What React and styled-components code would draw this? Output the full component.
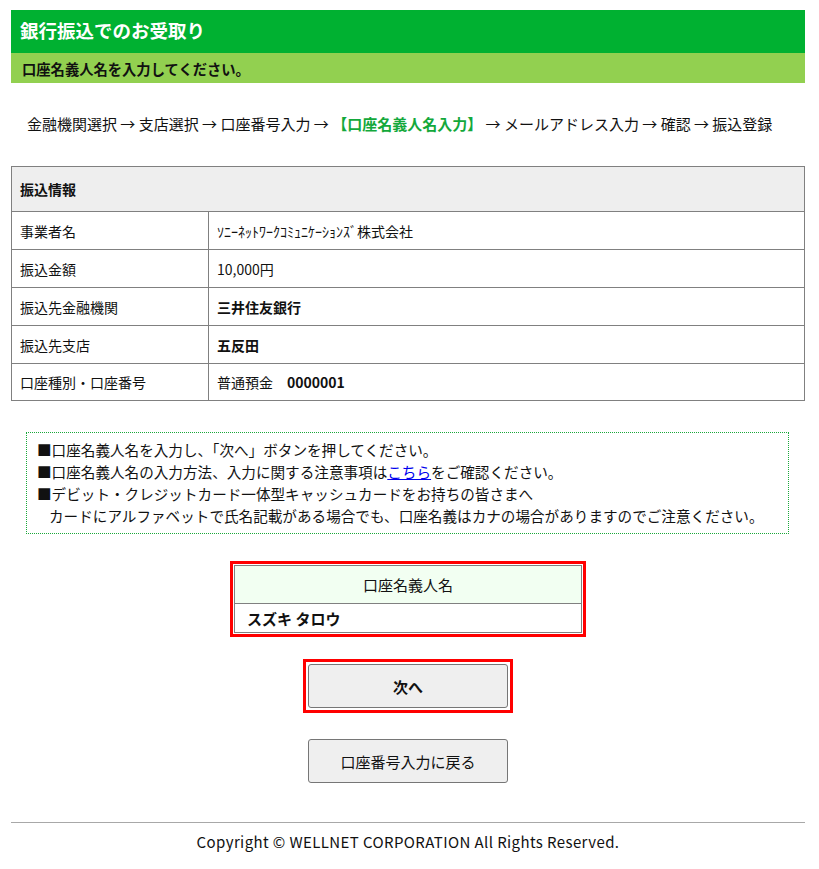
import React from "react";
import styled, { createGlobalStyle } from "styled-components";

const GlobalStyle = createGlobalStyle`
  body {
    margin: 0;
    background: #fff;
    color: #111;
    font-family: "Noto Sans CJK JP", "Noto Sans", sans-serif;
  }
`;

const Page = styled.div`
  padding: 10px 14px 0 11px;
`;

const TitleBar = styled.h1`
  margin: 0;
  height: 43px;
  padding: 0 0 3px 9px;
  box-sizing: border-box;
  display: flex;
  align-items: center;
  background: #00b131;
  color: #fff;
  font-size: 18.5px;
  font-weight: bold;
`;

const SubBar = styled.div`
  height: 30px;
  padding-left: 11px;
  display: flex;
  align-items: center;
  background: #92d050;
  font-size: 14.3px;
  font-weight: bold;
  color: #111;
`;

const Steps = styled.div`
  margin: 27px 0 28px;
  padding-left: 16px;
  height: 28px;
  line-height: 28px;
  font-size: 15px;
  white-space: nowrap;
`;

const Current = styled.strong`
  color: #13a83b;
`;

const InfoTable = styled.table`
  width: 100%;
  border-collapse: collapse;
  font-size: 14px;

  th,
  td {
    border: 1px solid #808080;
    padding: 0 8px;
    text-align: left;
  }
  th {
    height: 44px;
    background: #eeeeee;
  }
  td {
    height: 37px;
  }
  tr:last-child td {
    height: 36px;
  }
  td:first-child {
    width: 180px;
  }
`;

const Bold = styled.strong`
  font-weight: bold;
`;

const Notice = styled.div`
  margin: 31px 16px 0 15px;
  padding: 6px 10px;
  border: 1px dotted #1aa83a;
  font-size: 14.6px;
  line-height: 22px;
`;

const NoticeLine = styled.div`
  padding-left: ${(p) => (p.$indent ? "12px" : "0")};
  white-space: nowrap;
`;

const Link = styled.a`
  color: #0000ee;
  text-decoration: underline;
`;

const Center = styled.div`
  display: flex;
  flex-direction: column;
  align-items: center;
`;

const RedFrame = styled.div`
  border: 3px solid #ff0000;
  padding: ${(p) => p.$pad || "1px"};
  margin-top: ${(p) => p.$top || "0"};
`;

const NameTable = styled.table`
  width: 348px;
  border-collapse: collapse;
  font-size: 15px;

  th,
  td {
    border: 1px solid #808080;
  }
  th {
    height: 35px;
    background: #f2fff2;
    font-weight: normal;
    text-align: center;
  }
  td {
    height: 28px;
    padding: 0 12px;
    font-weight: bold;
  }
`;

const Button = styled.button`
  width: 200px;
  height: 44px;
  margin-top: ${(p) => p.$top || "0"};
  background: #efefef;
  border: 1px solid #767676;
  border-radius: 3px;
  font-family: inherit;
  font-size: 15px;
  font-weight: ${(p) => (p.$bold ? "bold" : "normal")};
  color: #111;
  display: block;
`;

const Footer = styled.footer`
  margin-top: 39px;
  border-top: 1px solid #a8a8a8;
  padding: 8px 0 18px;
  text-align: center;
  font-size: 15px;
  letter-spacing: 0.4px;
  line-height: 22px;
`;

const rows = [
  ["事業者名", <span>ｿﾆｰﾈｯﾄﾜｰｸｺﾐｭﾆｹｰｼｮﾝｽﾞ株式会社</span>],
  ["振込金額", "10,000円"],
  ["振込先金融機関", <Bold>三井住友銀行</Bold>],
  ["振込先支店", <Bold>五反田</Bold>],
  [
    "口座種別・口座番号",
    <span>
      普通預金　<Bold>0000001</Bold>
    </span>,
  ],
];

export default function App() {
  return (
    <>
      <GlobalStyle />
      <Page>
        <TitleBar>銀行振込でのお受取り</TitleBar>
        <SubBar>口座名義人名を入力してください。</SubBar>

        <Steps>
          金融機関選択 → 支店選択 → 口座番号入力 →{" "}
          <Current>【口座名義人名入力】</Current> → メールアドレス入力 → 確認 → 振込登録
        </Steps>

        <InfoTable>
          <thead>
            <tr>
              <th colSpan={2}>振込情報</th>
            </tr>
          </thead>
          <tbody>
            {rows.map(([label, value]) => (
              <tr key={label}>
                <td>{label}</td>
                <td>{value}</td>
              </tr>
            ))}
          </tbody>
        </InfoTable>

        <Notice>
          <NoticeLine>■口座名義人名を入力し、「次へ」ボタンを押してください。</NoticeLine>
          <NoticeLine>
            ■口座名義人名の入力方法、入力に関する注意事項は<Link href="#">こちら</Link>をご確認ください。
          </NoticeLine>
          <NoticeLine>■デビット・クレジットカード一体型キャッシュカードをお持ちの皆さまへ</NoticeLine>
          <NoticeLine $indent>
            カードにアルファベットで氏名記載がある場合でも、口座名義はカナの場合がありますのでご注意ください。
          </NoticeLine>
        </Notice>

        <Center>
          <RedFrame $top="27px">
            <NameTable>
              <thead>
                <tr>
                  <th>口座名義人名</th>
                </tr>
              </thead>
              <tbody>
                <tr>
                  <td>スズキ タロウ</td>
                </tr>
              </tbody>
            </NameTable>
          </RedFrame>
          <RedFrame $top="22px" $pad="2px">
            <Button $bold>次へ</Button>
          </RedFrame>
          <Button $top="26px">口座番号入力に戻る</Button>
        </Center>

        <Footer>Copyright © WELLNET CORPORATION All Rights Reserved.</Footer>
      </Page>
    </>
  );
}
